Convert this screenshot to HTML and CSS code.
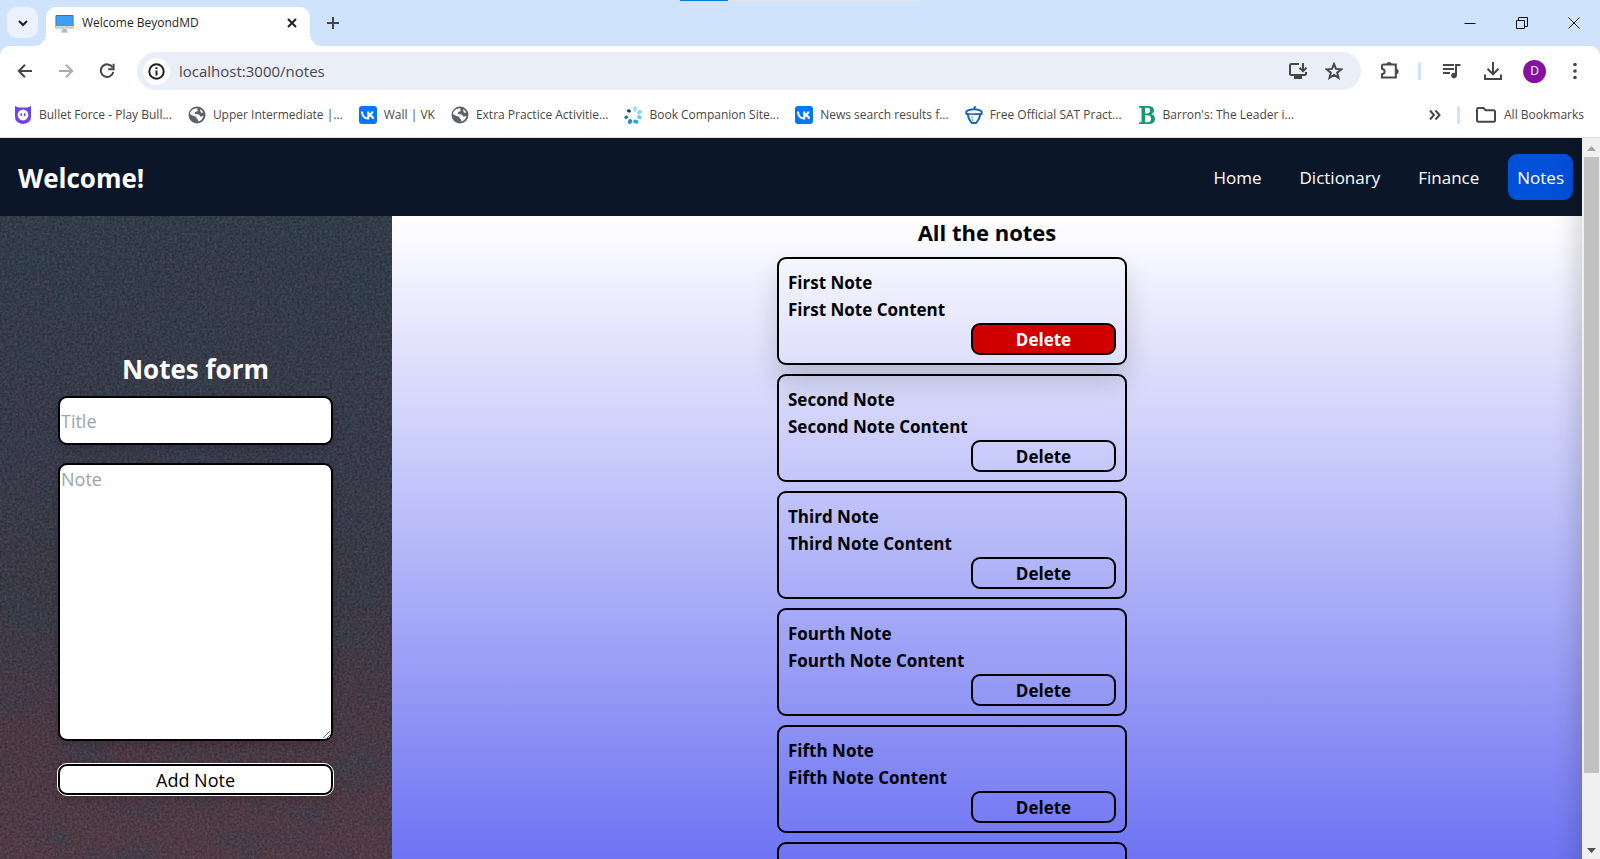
FILE: index.html
```html
<!DOCTYPE html>
<html lang="en">
<head>
<meta charset="utf-8">
<title>Welcome BeyondMD</title>
<link rel="stylesheet" href="styles.css">
</head>
<body>
<svg class="defs" aria-hidden="true">
  <symbol id="globe" viewBox="0 0 18 18">
    <circle cx="9" cy="9" r="8.500" fill="#5f6368"/>
    <path d="M9.500 2.200c-1 1.500.8 1.700 0 2.800-1 1-2.500.4-2.700 2-.2 1.500 2 .9 3.700 1.500 1.700.6.9 2 2.300 2.200 1.300.1 1.600-.8 2.700-.6-.5 2.400-2.600 4.900-5.300 5.400.3-1.100 0-2-.9-2.400-1-.5-.6-1.700-1.500-2.300C6.500 10 4 9.500 2 8.200 2 5 5.500 2 9.500 2.200z" fill="#fff"/>
    <path d="M12.300 3.300c-.6 1 .5 1.400.2 2.300-.2.700.5 1 1.100 1.200.7.100 1-.2 1.600.2-.4-1.600-1.500-3-2.900-3.700z" fill="#fff"/>
  </symbol>
  <symbol id="vk" viewBox="0 0 18 18">
    <rect width="18" height="18" rx="3" fill="#07f"/>
    <path d="M3 5.500c.2 4.500 2.200 7 6.300 7V5.500M9.300 9c2.200-.2 3.700-1.500 4.400-3.500M9.300 9c2.500.2 4.300 1.600 5 3.700" fill="none" stroke="#fff" stroke-width="2"/>
  </symbol>
</svg>

<header class="browser">
  <div class="progress"><span></span></div>
  <div class="tabstrip">
    <button class="tab-search" aria-label="Search tabs"><svg width="12" height="12" viewBox="0 0 12 12"><path d="M2 4l4 4 4-4" class="ln2 dark"/></svg></button>
    <div class="tab">
      <svg width="19" height="19" viewBox="0 0 19 19"><rect x=".5" y="1" width="18" height="13.500" rx="1" fill="#4d5b66"/><rect x="1.200" y="1.700" width="16.600" height="10.300" fill="#3b9ff5"/><rect x=".5" y="12" width="18" height="3" fill="#d7d3cb"/><path d="M7.500 15h4l.7 2.500h-5.400z" fill="#b9b5ae"/><path d="M6 18h7" stroke="#aaa69e"/></svg>
      <span class="tab-title">Welcome BeyondMD</span>
      <button aria-label="Close tab"><svg width="10" height="10" viewBox="0 0 10 10"><path d="M1 1l8 8M9 1l-8 8" class="ln2 dark"/></svg></button>
    </div>
    <button class="new-tab" aria-label="New tab"><svg width="12" height="12" viewBox="0 0 12 12"><path d="M6 0v12M0 6h12" class="ln2"/></svg></button>
    <div class="window-buttons">
      <button aria-label="Minimize"><svg width="12" height="12" viewBox="0 0 12 12"><path d="M.5 6.500h11" class="ln1"/></svg></button>
      <button aria-label="Restore"><svg width="12" height="12" viewBox="0 0 12 12"><path d="M.5 3.500h8v8h-8zM2.500 3V.5h9v9H9" class="ln1"/></svg></button>
      <button aria-label="Close"><svg width="12" height="12" viewBox="0 0 12 12"><path d="M.5.5l11 11M11.500.5l-11 11" class="ln1"/></svg></button>
    </div>
  </div>

  <div class="toolbar">
    <div class="nav-buttons">
      <button aria-label="Back"><svg width="16" height="16" viewBox="0 0 16 16"><path d="M15 8H2M8 1.800L1.800 8 8 14.200" class="ln2"/></svg></button>
      <button aria-label="Forward" class="dim"><svg width="16" height="16" viewBox="0 0 16 16"><path d="M1 8h13M8 1.800L14.200 8 8 14.200" class="ln2"/></svg></button>
      <button aria-label="Reload"><svg width="16" height="16" viewBox="0 0 16 16"><path d="M13.600 4.500A6.300 6.300 0 1 0 14.300 9" class="ln2"/><path d="M14.600.8v5.400H9.200" class="ln2"/></svg></button>
    </div>
    <div class="omnibox">
      <button class="info" aria-label="View site information"><svg width="17" height="17" viewBox="0 0 17 17"><circle cx="8.500" cy="8.500" r="7.200" class="ln2 dark"/><path d="M8.500 7.500v5M8.500 4.200v1.900" class="ln2 dark"/></svg></button>
      <input class="url" type="text" aria-label="Address" value="localhost:3000/notes">
      <button aria-label="Install app"><svg width="20" height="18" viewBox="0 0 20 18"><path d="M11 2H3.500Q2 2 2 3.500v8Q2 13 3.500 13h13q1.500 0 1.500-1.500V10" class="ln2"/><path d="M6 15.500h8" stroke="#474747" stroke-width="3"/><path d="M15 1v8M11.500 5.700L15 9.200l3.500-3.500" class="ln2"/></svg></button>
      <button aria-label="Bookmark this tab"><svg width="18" height="18" viewBox="0 0 18 18"><path d="M9 2l2 4.900 5.300.4-4.100 3.400 1.300 5.100L9 13l-4.500 2.800 1.300-5.100-4.100-3.400L7 6.900z" class="ln2"/></svg></button>
    </div>
    <button class="extensions" aria-label="Extensions"><svg width="20" height="20" viewBox="0 0 20 20"><path d="M3.500 3.500h12.300v13H2v-3.200q2.600-.5 2.600-2.800T2 7.700V4.500q0-1 1.500-1z" class="ln2"/><path d="M6.500 3.500a2.600 2.600 0 0 1 5.200 0zM16 7.800a2.600 2.600 0 0 1 0 5.200z" fill="#474747"/></svg></button>
    <i class="divider"></i>
    <button aria-label="Media controls"><svg width="19" height="18" viewBox="0 0 19 18"><path d="M1 3h11M1 7h11M1 11h7M14 13.500V3h4.500" class="ln2"/><circle cx="12" cy="13.500" r="2.800" fill="#474747"/></svg></button>
    <button aria-label="Downloads"><svg width="20" height="20" viewBox="0 0 20 20"><path d="M10 1v12M4.500 7.800L10 13.300l5.500-5.500M2 13.500V18h16v-4.500" class="ln2"/></svg></button>
    <button class="avatar" aria-label="Profile">D</button>
    <button aria-label="Menu"><svg width="6" height="18" viewBox="0 0 6 18"><g fill="#474747"><circle cx="3" cy="2.500" r="1.800"/><circle cx="3" cy="9" r="1.800"/><circle cx="3" cy="15.500" r="1.800"/></g></svg></button>
  </div>

  <nav class="bookmarks" aria-label="Bookmarks">
    <a href="#"><svg width="18" height="18" viewBox="0 0 18 18"><path d="M1 0l3.500 1.500h9L17 0v11q0 6-8 7-8-1-8-7z" fill="#6b42f5"/><circle cx="9" cy="9" r="5.400" fill="#fff"/><path d="M7.300 7.200v2.800M10.700 7.200v2.800" stroke="#6b42f5" stroke-width="1.500"/></svg><span>Bullet Force - Play Bull...</span></a>
    <a href="#"><svg width="18" height="18"><use href="#globe"/></svg><span>Upper Intermediate |...</span></a>
    <a href="#"><svg width="18" height="18"><use href="#vk"/></svg><span>Wall | VK</span></a>
    <a href="#"><svg width="18" height="18"><use href="#globe"/></svg><span>Extra Practice Activitie...</span></a>
    <a href="#"><svg width="18" height="18" viewBox="0 0 18 18"><g stroke-width="3.800" stroke-linecap="round"><path d="M11 2v2" stroke="#a5e3ee"/><path d="M15 6.500l1-.6" stroke="#8ad9ea"/><path d="M15 11l.8.500" stroke="#6fd0e4"/><path d="M11 15.500l1.500.4" stroke="#18b3d6"/><path d="M6.200 15l-.4 1" stroke="#1494c4"/><path d="M2.700 11l-.8.500" stroke="#1470a4" stroke-width="3"/><path d="M4.500 4.800l1 .3" stroke="#164066" stroke-width="3"/></g></svg><span>Book Companion Site...</span></a>
    <a href="#"><svg width="18" height="18"><use href="#vk"/></svg><span>News search results f...</span></a>
    <a href="#"><svg width="18" height="18" viewBox="0 0 18 18"><path d="M1.500 8Q.5 4.800 3.500 4.200q5.500-1.700 11 0 3 .6 2 3.800zM3 8q0 5 4 9h4q4-4 4-9M9 3.500q0-2 1.700-3" fill="none" stroke="#1b66ad" stroke-width="2"/><path d="M3.500 6.500h11" stroke="#fff" stroke-width="1.500"/><path d="M4.500 8h5M7 9.500q-.2 3 1 5.500" fill="none" stroke="#6ea3d0"/></svg><span>Free Official SAT Pract...</span></a>
    <a href="#"><svg width="18" height="18" viewBox="0 0 18 18"><path fill-rule="evenodd" d="M1 0h9q6 0 6 4.300 0 3.200-3 4 4 .8 4 4.700 0 5-6.500 5H1v-1.500l2.500-.5V2L1 1.500zM7 1.800v5.700h2q3 0 3-3t-3-2.700zM7 9.200v7h2.500q3.500 0 3.500-3.500T9.500 9.200z" fill="#109b74"/></svg><span>Barron's: The Leader i...</span></a>
    <button class="overflow" aria-label="More bookmarks"><svg width="12" height="12" viewBox="0 0 12 12"><path d="M1 1.500L5 6l-4 4.500M6.500 1.500l4 4.500-4 4.500" class="ln2"/></svg></button>
    <i class="divider"></i>
    <a href="#" class="all"><svg width="20" height="16" viewBox="0 0 20 16"><path d="M1 2.500Q1 1 2.500 1h5l2 2.200h8q1.500 0 1.500 1.500v8.500q0 1.500-1.500 1.500h-15Q1 14.700 1 13.200z" class="ln2"/></svg><span>All Bookmarks</span></a>
  </nav>
</header>

<div class="viewport">
  <div class="page">
    <nav class="navbar">
      <a class="brand" href="#">Welcome!</a>
      <div class="links">
        <a href="#">Home</a>
        <a href="#">Dictionary</a>
        <a href="#">Finance</a>
        <a href="#" class="active">Notes</a>
      </div>
    </nav>
    <main class="content">
      <aside class="sidebar">
        <svg class="grain" aria-hidden="true">
          <filter id="fine" x="0" y="0" width="100%" height="100%" color-interpolation-filters="sRGB"><feTurbulence type="fractalNoise" baseFrequency=".4" numOctaves="2" seed="4"/><feColorMatrix values="1 0 0 0 -.22  1 0 0 0 -.24  1 0 0 0 -.22  0 0 0 0 1"/></filter>
          <filter id="patches" x="0" y="0" width="100%" height="100%" color-interpolation-filters="sRGB"><feTurbulence type="fractalNoise" baseFrequency=".018 .03" numOctaves="3" seed="9"/><feColorMatrix values="0 0 0 0 .16  0 0 0 0 .26  0 0 0 0 .32  2.500 0 0 0 -1.100"/></filter>
          <rect width="100%" height="100%" filter="url(#patches)" opacity=".4"/>
          <rect width="100%" height="100%" filter="url(#fine)" opacity=".16"/>
        </svg>
        <form class="note-form">
          <h2>Notes form</h2>
          <input type="text" placeholder="Title" aria-label="Title">
          <textarea placeholder="Note" aria-label="Note"></textarea>
          <button type="button">Add Note</button>
        </form>
      </aside>
      <section class="notes">
        <h2>All the notes</h2>
        <div class="list">
          <article class="note raised"><p>First Note</p><p>First Note Content</p><button class="danger">Delete</button></article>
          <article class="note"><p>Second Note</p><p>Second Note Content</p><button>Delete</button></article>
          <article class="note"><p>Third Note</p><p>Third Note Content</p><button>Delete</button></article>
          <article class="note"><p>Fourth Note</p><p>Fourth Note Content</p><button>Delete</button></article>
          <article class="note"><p>Fifth Note</p><p>Fifth Note Content</p><button>Delete</button></article>
          <article class="note"></article>
        </div>
      </section>
    </main>
  </div>
  <div class="scrollbar" aria-hidden="true">
    <svg width="18" height="19" viewBox="0 0 18 19"><path d="M5 13h9L9.500 8z" fill="#a3a3a3"/></svg>
    <div class="track"><div class="thumb"></div></div>
    <svg width="18" height="18" viewBox="0 0 18 18"><path d="M5 7h9l-4.500 5z" fill="#505050"/></svg>
  </div>
</div>
</body>
</html>
```
FILE: styles.css
```css
* { box-sizing: border-box; }
html, body { height: 100%; }
body {
  margin: 0;
  display: flex;
  flex-direction: column;
  overflow: hidden;
  font-family: "Open Sans", "Noto Sans", sans-serif;
  font-size: 18px;
  line-height: 27px;
  color: #000;
}
h2, p { margin: 0; }
a { color: inherit; text-decoration: none; }
button, input, textarea { font: inherit; color: inherit; }
button { padding: 0; border: 0; background: none; }
svg { display: block; flex: none; }
.defs { position: absolute; width: 0; height: 0; }
.ln1 { fill: none; stroke: #111; stroke-width: 1; }
.ln2 { fill: none; stroke: #474747; stroke-width: 2; }
.dark { stroke: #1f1f1f; }

/* Browser frame */
.browser {
  position: relative;
  flex: none;
  background: #cfe4fc;
  border-bottom: 1px solid #dcdfe3;
  font-size: 12px;
  line-height: 18px;
}
.browser button { display: flex; align-items: center; justify-content: center; }
.progress { position: absolute; top: 0; left: 680px; width: 241px; height: 1px; background: #e3e3e3; }
.progress span { display: block; width: 20%; height: 1px; background: #0078d7; }
.tabstrip { display: flex; height: 46px; padding-left: 7px; }
.tab-search { width: 31px; height: 31px; margin-top: 7px; border-radius: 10px; background: #e9f2fe; }
.tab {
  position: relative;
  display: flex;
  align-items: center;
  width: 264px;
  height: 39px;
  margin: 7px 0 0 8px;
  padding: 0 13px 7px 9px;
  border-radius: 10px 10px 0 0;
  background: #fff;
}
.tab::before, .tab::after {
  content: "";
  position: absolute;
  bottom: 0;
  width: 12px;
  height: 12px;
}
.tab::before { left: -12px; background: radial-gradient(circle at 0 0, transparent 12px, #fff 12px); }
.tab::after { right: -12px; background: radial-gradient(circle at 100% 0, transparent 12px, #fff 12px); }
.tab-title { flex: 1; padding-left: 8px; color: #1f1f1f; }
.new-tab { width: 31px; height: 31px; margin: 7px 0 0 7px; }
.window-buttons { display: flex; margin-left: auto; }
.window-buttons button { width: 52px; height: 45px; }

.toolbar {
  display: flex;
  align-items: center;
  height: 48px;
  padding: 6px 16px 4px 17px;
  border-radius: 10px 10px 0 0;
  background: #fff;
}
.toolbar > button { width: 24px; margin-left: 18px; }
.nav-buttons { display: flex; gap: 25px; margin-right: 22px; }
.dim { opacity: .45; }
.omnibox {
  display: flex;
  align-items: center;
  flex: 1;
  gap: 17px;
  height: 38px;
  padding: 0 18px 0 6px;
  border-radius: 19px;
  background: #e9eef8;
}
.info { width: 27px; height: 27px; border-radius: 50%; background: #fff; }
.url {
  flex: 1;
  min-width: 0;
  margin-left: -8px;
  padding: 0;
  border: 0;
  background: none;
  color: #474747;
  font-size: 15px;
  line-height: 22px;
}
.divider { width: 3px; height: 18px; border-radius: 2px; background: #cfe4fc; }
.toolbar > .extensions { margin-left: 17px; }
.toolbar .divider { margin-left: 16px; }
.toolbar > .avatar {
  width: 23px;
  height: 23px;
  border-radius: 50%;
  background: #8610a0;
  color: #fff;
}
.toolbar > button:last-child { width: 18px; margin-left: 20px; }

.bookmarks {
  display: flex;
  align-items: center;
  gap: 16px;
  height: 43px;
  padding: 0 16px 2px 14px;
  background: #fff;
  color: #474747;
}
.bookmarks a { display: flex; align-items: center; gap: 7px; white-space: nowrap; }
.overflow { margin-left: auto; }
.bookmarks .all { gap: 8px; }

/* Page */
.viewport { flex: 1; min-height: 0; display: flex; overflow: hidden; }
.page { flex: 1; min-width: 0; display: flex; flex-direction: column; }
.navbar {
  flex: none;
  display: flex;
  align-items: center;
  justify-content: space-between;
  padding: 16px 9px 16px 18px;
  background: #0b1729;
  color: #fff;
}
.brand { padding-top: 2px; font-size: 26px; font-weight: 700; line-height: 36px; }
.links { display: flex; gap: 20px; font-size: 17px; }
.links a { padding: 10px 9px 8px; border-radius: 9px; line-height: 28px; }
.links .active { background: #0050d8; }

.content { flex: 1; min-height: 0; display: flex; }
.sidebar {
  position: relative;
  width: 392px;
  padding: 135px 59px 0 58px;
  background: linear-gradient(#303c49, #37394a 35%, #3b3846 60%, #4a3742 80%, #533a46);
}
.grain { position: absolute; inset: 0; width: 100%; height: 100%; }
.note-form { position: relative; display: flex; flex-direction: column; }
.note-form h2 { margin-bottom: 8px; color: #fff; font-size: 26px; line-height: 37px; text-align: center; }
.note-form input, .note-form textarea, .note-form button {
  border: 2px solid #000;
  border-radius: 9px;
  background: #fff;
}
.note-form input, .note-form textarea { padding: 1px 0 0 1px; outline: 0; box-shadow: 0 4px 8px rgba(0, 0, 0, .15); }
.note-form input { height: 49px; margin-bottom: 18px; }
.note-form textarea { height: 278px; margin-bottom: 23px; resize: vertical; }
.note-form button { padding-top: 1px; line-height: 26px; outline: 1px solid #fff; box-shadow: 0 4px 8px rgba(0, 0, 0, .15); }
::placeholder { color: #9ca3af; opacity: 1; }

.notes { flex: 1; min-width: 0; overflow: hidden; background: linear-gradient(#fff, #6e74f2); }
.notes h2 { margin-bottom: 8px; font-size: 22px; font-weight: 700; line-height: 33px; text-align: center; }
.list { display: flex; flex-direction: column; align-items: center; gap: 9px; padding-right: 70px; }
.note {
  width: 350px;
  min-height: 108px;
  padding: 10px 9px 8px;
  border: 2px solid #000;
  border-radius: 9px;
  font-size: 17px;
  font-weight: 700;
}
.raised { box-shadow: 0 18px 28px rgba(0, 0, 0, .16); }
.note button {
  display: block;
  width: 145px;
  height: 32px;
  margin-left: auto;
  border: 2px solid #000;
  border-radius: 9px;
}
.note .danger { background: #d00000; color: #fff; }

.scrollbar {
  flex: none;
  z-index: 1;
  display: flex;
  flex-direction: column;
  width: 18px;
  background: #f0f0f0;
  box-shadow: 0 25px 28px rgba(0, 0, 0, .28);
}
.track { flex: 1; padding: 0 1px 0 2px; }
.thumb { height: 90%; background: #c1c1c1; }
```
